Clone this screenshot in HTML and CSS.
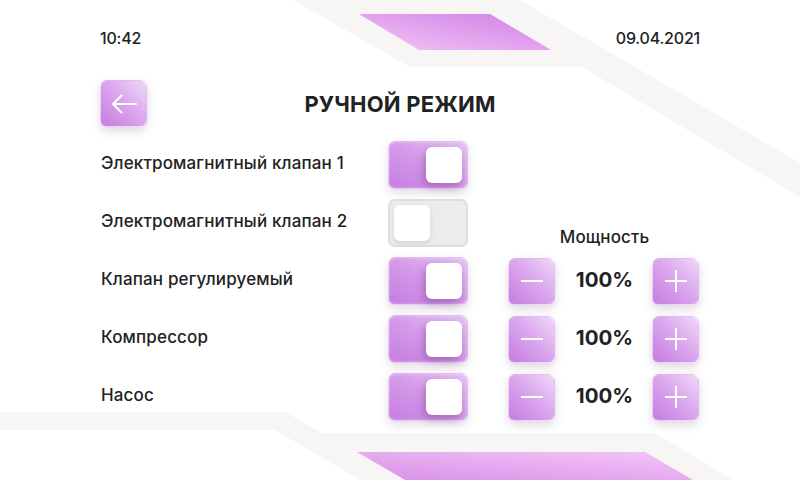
FILE: index.html
```html
<!DOCTYPE html>
<html lang="ru">
<head>
<meta charset="utf-8">
<title>Ручной режим</title>
<link rel="stylesheet" href="styles.css">
</head>
<body>
<div class="screen">
  <svg class="bg" viewBox="0 0 800 480" width="800" height="480" aria-hidden="true">
    <defs>
      <linearGradient id="gTop" x1="0" y1="1" x2="1" y2="0">
        <stop offset="0" stop-color="#f3c4f6"/>
        <stop offset="1" stop-color="#cf80e6"/>
      </linearGradient>
      <linearGradient id="gBot" x1="0" y1="1" x2="1" y2="0">
        <stop offset="0" stop-color="#d890e8"/>
        <stop offset="1" stop-color="#f4c6f7"/>
      </linearGradient>
    </defs>
    <polygon fill="#f7f6f4" points="293,0 520,0 800,163 800,197 582,67 410,67"/>
    <polygon fill="url(#gTop)" points="359,14 490,14 551,50 419,50"/>
    <polygon fill="#f7f6f4" points="0,412 285,412 322,433 655,433 733,480 360,480 275,430 0,430"/>
    <polygon fill="url(#gBot)" points="357,452 645,452 693,480 405,480"/>
  </svg>

  <header class="status">
    <span class="time">10:42</span>
    <span class="date">09.04.2021</span>
  </header>

  <div class="titlebar">
    <button class="btn back" type="button" aria-label="Назад">
      <svg viewBox="0 0 26 20" width="26" height="20"><path d="M25 10H2M10.5 1.5L2 10l8.5 8.5" fill="none" stroke="#fff" stroke-width="2" stroke-linecap="round" stroke-linejoin="round"/></svg>
    </button>
    <h1 class="title">РУЧНОЙ РЕЖИМ</h1>
  </div>

  <div class="controls">
    <div class="label">Электромагнитный клапан 1</div>
    <div class="toggle on"><span class="knob"></span></div>
    <div class="empty"></div>

    <div class="label">Электромагнитный клапан 2</div>
    <div class="toggle off"><span class="knob"></span></div>
    <div class="power-head">Мощность</div>

    <div class="label">Клапан регулируемый</div>
    <div class="toggle on"><span class="knob"></span></div>
    <div class="power">
      <button class="btn step" type="button" aria-label="Уменьшить"><svg viewBox="0 0 24 24" width="24" height="24"><path d="M1 12h22" stroke="#fff" stroke-width="2"/></svg></button>
      <span class="value">100%</span>
      <button class="btn step" type="button" aria-label="Увеличить"><svg viewBox="0 0 24 24" width="24" height="24"><path d="M1 12h22M12 1v22" stroke="#fff" stroke-width="2"/></svg></button>
    </div>

    <div class="label">Компрессор</div>
    <div class="toggle on"><span class="knob"></span></div>
    <div class="power">
      <button class="btn step" type="button" aria-label="Уменьшить"><svg viewBox="0 0 24 24" width="24" height="24"><path d="M1 12h22" stroke="#fff" stroke-width="2"/></svg></button>
      <span class="value">100%</span>
      <button class="btn step" type="button" aria-label="Увеличить"><svg viewBox="0 0 24 24" width="24" height="24"><path d="M1 12h22M12 1v22" stroke="#fff" stroke-width="2"/></svg></button>
    </div>

    <div class="label">Насос</div>
    <div class="toggle on"><span class="knob"></span></div>
    <div class="power">
      <button class="btn step" type="button" aria-label="Уменьшить"><svg viewBox="0 0 24 24" width="24" height="24"><path d="M1 12h22" stroke="#fff" stroke-width="2"/></svg></button>
      <span class="value">100%</span>
      <button class="btn step" type="button" aria-label="Увеличить"><svg viewBox="0 0 24 24" width="24" height="24"><path d="M1 12h22M12 1v22" stroke="#fff" stroke-width="2"/></svg></button>
    </div>
  </div>
</div>
</body>
</html>
```

FILE: styles.css
```css
* { box-sizing: border-box; }

html, body {
  margin: 0;
  padding: 0;
  background: #ffffff;
}

body {
  font-family: Inter, "Noto Sans", "DejaVu Sans", sans-serif;
  color: #222222;
}

.screen {
  position: relative;
  width: 800px;
  height: 480px;
  overflow: hidden;
  padding: 28px 100px 0 100px;
}

.bg {
  position: absolute;
  left: 0;
  top: 0;
  z-index: 0;
}

.status, .titlebar, .controls {
  position: relative;
  z-index: 1;
}

.status {
  display: flex;
  justify-content: space-between;
  align-items: center;
  height: 20px;
  font-size: 16px;
  font-weight: 500;
  line-height: 20px;
  letter-spacing: -0.2px;
}

.titlebar {
  display: grid;
  grid-template-columns: 47px 1fr 47px;
  align-items: center;
  margin-top: 32px;
  height: 47px;
}

.title {
  margin: 0;
  text-align: center;
  font-size: 22px;
  font-weight: 700;
  letter-spacing: 0.2px;
}

.btn {
  display: flex;
  align-items: center;
  justify-content: center;
  width: 47px;
  height: 47px;
  padding: 0;
  border: 1px solid rgba(255, 255, 255, 0.35);
  border-radius: 7px;
  background: linear-gradient(45deg, #c67be1 0%, #dca8ee 55%, #eedaf7 100%);
  box-shadow: 0 4px 10px rgba(80, 40, 100, 0.18);
  cursor: pointer;
}

.controls {
  display: grid;
  grid-template-columns: 288px 80px 231px;
  grid-auto-rows: 48px;
  row-gap: 10px;
  margin-top: 14px;
  align-items: center;
}

.label {
  font-size: 17px;
  font-weight: 500;
  letter-spacing: 0.15px;
  padding-left: 1px;
  padding-bottom: 5px;
}

.toggle {
  position: relative;
  display: flex;
  align-items: center;
  width: 80px;
  height: 48px;
  border-radius: 7px;
  padding: 0 5px;
}

.toggle.on {
  justify-content: flex-end;
  background: linear-gradient(30deg, #c67be1 0%, #d49ae9 50%, #e6c5f2 100%);
  border: 1px solid rgba(255, 255, 255, 0.4);
  box-shadow: 0 4px 10px rgba(80, 40, 100, 0.16), inset 0 0 3px rgba(255, 255, 255, 0.4);
}

.toggle.off {
  justify-content: flex-start;
  background: #ececec;
  border: 2px solid #dedede;
  padding: 0 4px;
}

.knob {
  display: block;
  width: 36px;
  height: 36px;
  border-radius: 6px;
  background: #ffffff;
}

.toggle.on .knob {
  box-shadow: -2px 4px 8px rgba(110, 50, 130, 0.45);
}

.toggle.off .knob {
  box-shadow: 0 2px 5px rgba(0, 0, 0, 0.12);
}

.power-head {
  align-self: end;
  text-align: center;
  margin-left: 40px;
  padding-left: 2px;
  padding-bottom: 0;
  font-size: 17px;
  font-weight: 500;
  letter-spacing: 0.1px;
}

.power {
  display: flex;
  align-items: center;
  justify-content: space-between;
  margin-left: 40px;
}

.value {
  font-size: 20.5px;
  font-weight: 700;
  padding-left: 2px;
  padding-bottom: 3px;
}
```
